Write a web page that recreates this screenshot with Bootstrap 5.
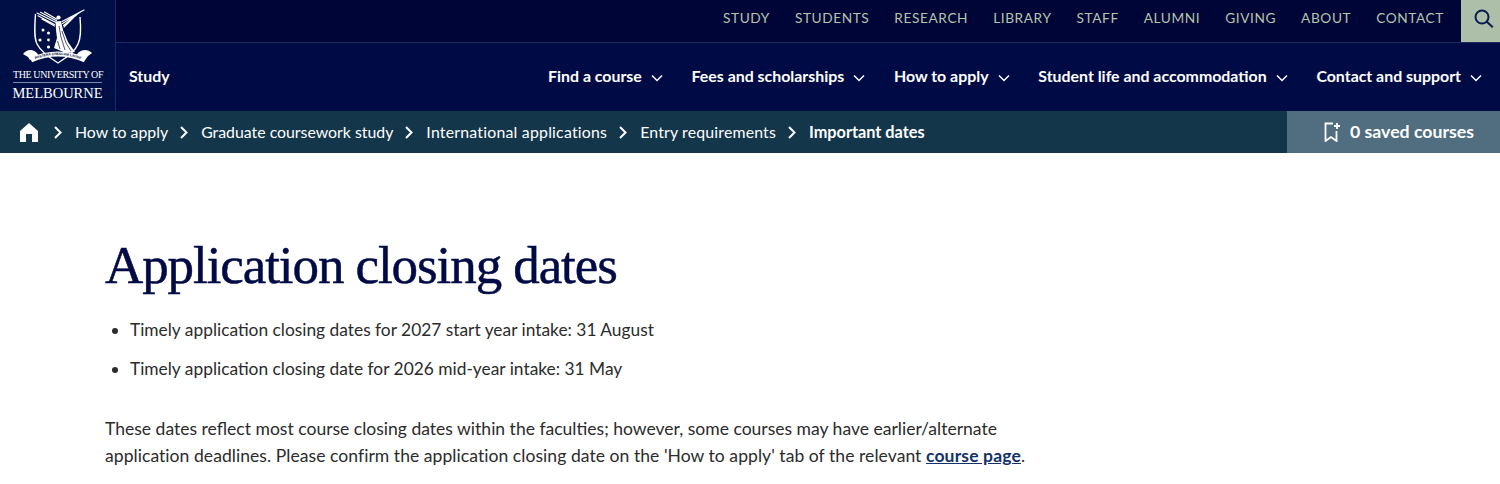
<!DOCTYPE html>
<html lang="en"><head><meta charset="utf-8"><title>Application closing dates</title>
<link rel="stylesheet" href="https://cdn.jsdelivr.net/npm/bootstrap@5.3.0/dist/css/bootstrap.min.css">
<style>
body{font-family:"Lato","Noto Sans",sans-serif;font-size:17.35px;color:#2b2b2b;background:#fff;overflow:hidden}
.uni-head{background:#000b45;height:111px}
.uni-brand{width:116px;background:#000f46;border-right:1px solid #1c2a63;color:#fff;padding-top:8px}
.uni-crest{display:block;margin-bottom:3px}
.uni-brand .l1{font-family:"Liberation Serif",serif;font-size:10px;line-height:11px;letter-spacing:-.4px;white-space:nowrap;border-bottom:1px solid #7d86a8;padding-bottom:2px;margin-bottom:3px;width:89px;text-align:center}
.uni-brand .l2{font-family:"Liberation Serif",serif;font-size:14.5px;line-height:15px;white-space:nowrap}
.uni-top{height:43px;background:#000537;border-bottom:1px solid #1c2a63}
.uni-top a{color:#b5c4ab;font-size:13.7px;letter-spacing:.58px;text-decoration:none;margin-right:25px;white-space:nowrap;margin-bottom:6px}
.uni-search{width:39px;height:42px;background:#adbfa8;margin-left:-8px;padding:0 0 6px 6px}
.uni-main{height:68px;background:#000b45;padding:0 18px 2px 13px}
.uni-items{column-gap:28.75px}
.uni-main a{color:#fff;font-weight:700;font-size:15.9px;text-decoration:none;white-space:nowrap}
.uni-main .chev{margin-left:9px}
.uni-crumb{height:42px;background:#14364b;color:#fff;font-size:15.85px}
.uni-trail{padding-left:20px}
.uni-trail a{color:#fff;text-decoration:none;white-space:nowrap}
.uni-trail .uni-tight{letter-spacing:.22px}
.uni-trail .uni-tight2{letter-spacing:.17px}
.uni-trail strong{font-size:16.3px;white-space:nowrap}
.uni-sep{margin:0 13px 0 12px}
.uni-home{margin-right:4px}
.uni-saved{width:213px;background:#506e80;font-weight:700;font-size:17.7px;padding-right:26px;white-space:nowrap;column-gap:9px}
.uni-title{font-family:"Liberation Serif",serif;color:#000b45;font-size:53px;line-height:60px;font-weight:400;letter-spacing:-1.08px;margin:0 0 21px;-webkit-text-stroke:.5px #000b45}
.uni-body{padding:82px 0 0 105px;width:1075px}
.uni-list{margin:0 0 33px;padding-left:25px}
.uni-list li{line-height:27px;margin-bottom:12px}
.uni-para{line-height:27px;margin:0;font-size:17.55px}
.uni-para .uni-second{letter-spacing:.05px}
.uni-para a{color:#123267;font-weight:700;letter-spacing:.15px}
</style></head><body>
<header class="uni-head d-flex">
  <a class="uni-brand d-flex flex-column align-items-center flex-shrink-0 text-decoration-none" href="#">
    <svg class="uni-crest" width="75" height="58" viewBox="20 8 75 58" aria-hidden="true">
      <path d="M35.5 14 C34.5 28 34 38 37 44 C41 52 50 58 58 63 C66 58 75 52 78 44 C81 38 81 28 80 17" fill="none" stroke="#fff" stroke-width="1.4"/>
      <g stroke="#fff" stroke-width="1.15" fill="none" stroke-linecap="round"><path d="M37 13 L56 22.5 M40.5 12.3 L56.5 20.8 M44.5 12 L57 19.3 M38 15.8 L54.5 24.5 M42 19 L54.5 26"/><path d="M84 10 L62 21.5 M80.5 12 L62.5 23.5 M77 14.5 L63.5 25.5 M73.5 17.5 L64 27"/></g>
      <circle cx="58.5" cy="17.5" r="2.1" fill="#fff"/>
      <path d="M55.5 21.5 L61 21 L63 30 L68 42 L75 52 L66 53 L54 48 L57 38 L56 30Z" fill="#fff"/>
      <path d="M59 26 L61 37 L65 50 M62 31 L66 43 L71 51 M57.5 41 L60 49" stroke="#000f46" stroke-width=".7" fill="none"/>
      <g fill="#fff"><circle cx="43" cy="30" r="1.5"/><circle cx="48.5" cy="33" r="1.5"/><circle cx="40" cy="40" r="1.6"/><circle cx="48.5" cy="40" r="1.4"/><circle cx="48.5" cy="47" r="1.6"/></g>
      <path d="M31 60 C42 55 50 54 58 54 C66 54 74 55 85 60" fill="none" stroke="#fff" stroke-width="5.2"/>
      <path d="M23 54 C27 49 33 49 37 53 L39 56 L30 60 L28 57 Z M92 53 C88 49 82 49 78 53 L76 56 L85 60 L88 56 Z" fill="#fff"/>
      <path d="M31 61 C42 56 50 55 58 55 C66 55 74 56 85 61" id="uni-arc-text" fill="none" stroke="none"/>
      <text font-family="Liberation Sans,sans-serif" font-size="3.4" fill="#000f46" font-weight="700"><textPath href="#uni-arc-text" startOffset="50%" text-anchor="middle">POSTERA CRESCAM LAUDE</textPath></text>
    </svg>
    <span class="l1">THE UNIVERSITY OF</span>
    <span class="l2">MELBOURNE</span>
  </a>
  <div class="flex-grow-1 d-flex flex-column">
    <nav class="uni-top d-flex justify-content-end align-items-center">
      <a href="#">STUDY</a><a href="#">STUDENTS</a><a href="#">RESEARCH</a><a href="#">LIBRARY</a><a href="#">STAFF</a><a href="#">ALUMNI</a><a href="#">GIVING</a><a href="#">ABOUT</a><a href="#">CONTACT</a>
      <span class="uni-search d-flex align-items-center justify-content-center">
        <svg width="20" height="19" viewBox="0 0 20 19" fill="none" stroke="#0a1a50" stroke-width="2"><circle cx="8" cy="8" r="6.5"/><path d="M12.8 12.8 L18.8 18.2"/></svg>
      </span>
    </nav>
    <nav class="uni-main d-flex align-items-center justify-content-between">
      <a href="#" class="me-auto">Study</a>
      <div class="uni-items d-flex">
        <a href="#">Find a course<svg class="chev" width="12" height="8" viewBox="0 0 12 8" fill="none" stroke="#fff" stroke-width="1.5"><path d="M1 1.5 L6 6.5 L11 1.5"/></svg></a>
        <a href="#">Fees and scholarships<svg class="chev" width="12" height="8" viewBox="0 0 12 8" fill="none" stroke="#fff" stroke-width="1.5"><path d="M1 1.5 L6 6.5 L11 1.5"/></svg></a>
        <a href="#">How to apply<svg class="chev" width="12" height="8" viewBox="0 0 12 8" fill="none" stroke="#fff" stroke-width="1.5"><path d="M1 1.5 L6 6.5 L11 1.5"/></svg></a>
        <a href="#">Student life and accommodation<svg class="chev" width="12" height="8" viewBox="0 0 12 8" fill="none" stroke="#fff" stroke-width="1.5"><path d="M1 1.5 L6 6.5 L11 1.5"/></svg></a>
        <a href="#">Contact and support<svg class="chev" width="12" height="8" viewBox="0 0 12 8" fill="none" stroke="#fff" stroke-width="1.5"><path d="M1 1.5 L6 6.5 L11 1.5"/></svg></a>
      </div>
    </nav>
  </div>
</header>
<nav class="uni-crumb d-flex align-items-stretch">
  <div class="uni-trail flex-grow-1 d-flex align-items-center">
    <svg class="uni-home" width="18" height="19" viewBox="0 0 18 19" fill="#fff"><path d="M9 0 L18 8 V19 H12 V11 H6 V19 H0 V8Z"/></svg>
    <svg class="uni-sep" width="8" height="13" viewBox="0 0 8 13" fill="none" stroke="#fff" stroke-width="2"><path d="M1 1 L6.5 6.5 L1 12"/></svg>
    <a href="#">How to apply</a>
    <svg class="uni-sep" width="8" height="13" viewBox="0 0 8 13" fill="none" stroke="#fff" stroke-width="2"><path d="M1 1 L6.5 6.5 L1 12"/></svg>
    <a href="#">Graduate coursework study</a>
    <svg class="uni-sep" width="8" height="13" viewBox="0 0 8 13" fill="none" stroke="#fff" stroke-width="2"><path d="M1 1 L6.5 6.5 L1 12"/></svg>
    <a href="#" class="uni-tight">International applications</a>
    <svg class="uni-sep" width="8" height="13" viewBox="0 0 8 13" fill="none" stroke="#fff" stroke-width="2"><path d="M1 1 L6.5 6.5 L1 12"/></svg>
    <a href="#" class="uni-tight2">Entry requirements</a>
    <svg class="uni-sep" width="8" height="13" viewBox="0 0 8 13" fill="none" stroke="#fff" stroke-width="2"><path d="M1 1 L6.5 6.5 L1 12"/></svg>
    <strong>Important dates</strong>
  </div>
  <div class="uni-saved d-flex align-items-center justify-content-end">
    <svg width="17" height="20" viewBox="0 0 17 20" fill="none" stroke="#fff" stroke-width="1.8"><path d="M9 1.5 H1.5 V19 L7 15 L12.5 19 V9"/><path d="M13 1 V7 M10 4 H16"/></svg>
    <span>0 saved courses</span>
  </div>
</nav>
<main class="uni-body">
  <h1 class="uni-title">Application closing dates</h1>
  <ul class="uni-list">
    <li>Timely application closing dates for 2027 start year intake: 31 August</li>
    <li>Timely application closing date for 2026 mid-year intake: 31 May</li>
  </ul>
  <p class="uni-para">These dates reflect most course closing dates within the faculties; however, some courses may have earlier/alternate <span class="uni-second">application deadlines. Please confirm the application closing date on the 'How to apply' tab of the relevant</span> <a href="#">course page</a>.</p>
</main>
</body></html>
